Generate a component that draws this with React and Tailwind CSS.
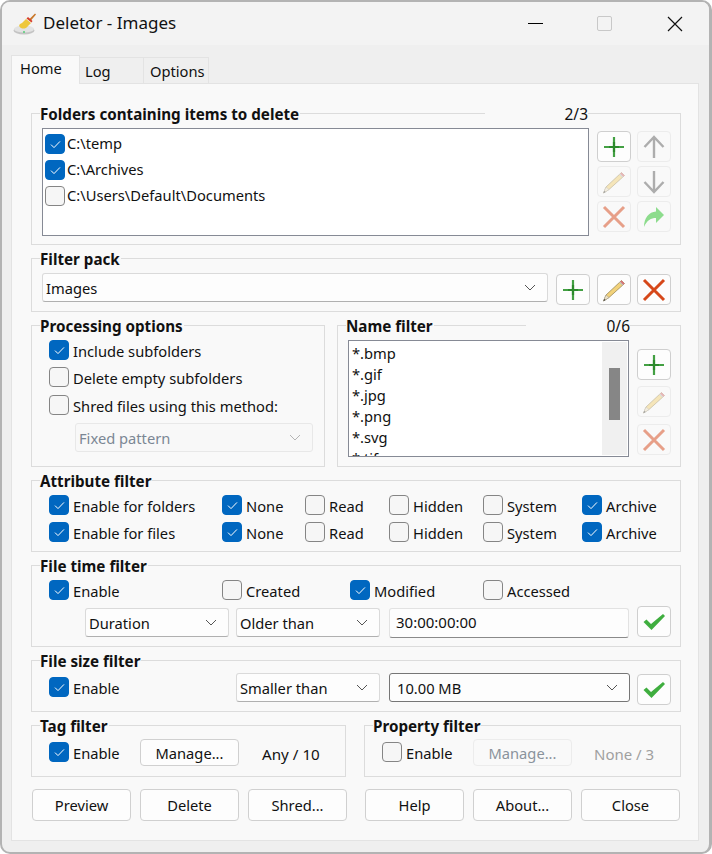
import React from "react";

const F = "[font-family:'Noto_Sans',sans-serif]";

function Check({ on, label, w }) {
  return (
    <div className="flex items-start shrink-0 h-[20px]" style={w ? { width: w } : undefined}>
      <span className={"w-[20px] h-[20px] rounded-[4px] shrink-0 flex items-center justify-center border " + (on ? "bg-[#0067c0] border-[#0067c0]" : "bg-[#f6f6f6] border-[#858585]")}>
        {on && (
          <svg width="11" height="9" viewBox="0 0 11 9" fill="none"><path d="M1 4.6 L4 7.6 L10 1.4" stroke="#fff" strokeWidth="1" /></svg>
        )}
      </span>
      <span className="ml-[4px] text-[14.7px] leading-[23px] whitespace-nowrap text-[#111]">{label}</span>
    </div>
  );
}

const Plus = () => (
  <svg width="20" height="20" viewBox="0 0 20 20"><path d="M0 10H20M10 0V20" stroke="#43a043" strokeWidth="2.2" /><path d="M5 10H15M10 5V15" stroke="#2c8a2c" strokeWidth="2.2" /></svg>
);
const Cross = ({ dim }) => (
  <svg width="24" height="24" viewBox="0 0 24 24" className={dim ? "opacity-50" : ""}><path d="M2 2L22 22M22 2L2 22" stroke="#d6481a" strokeWidth="3" /></svg>
);
const Pencil = ({ dim }) => (
  <svg width="24" height="24" viewBox="0 0 24 24" className={dim ? "opacity-50" : ""}>
    <path d="M19.5 2.5 L22.5 5.5 L7 19.5 L1.5 23 L4 17 Z" fill="#f2d27a" stroke="#8f7d4a" strokeWidth="0.7" />
    <path d="M4 17 L7 19.5 L1.5 23 Z" fill="#efe3c6" stroke="#8a8a8a" strokeWidth="0.4" />
    <path d="M1.5 23 L2.3 21 L3.6 22 Z" fill="#333" />
    <path d="M19.5 2.5 L22.5 5.5 L21.2 6.7 L18.2 3.7 Z" fill="#d9707a" />
    <path d="M18.2 3.7 L21.2 6.7 L20.2 7.6 L17.2 4.6 Z" fill="#bdbdbd" />
  </svg>
);
const Arrow = ({ down }) => (
  <svg width="22" height="24" viewBox="0 0 22 24" className={down ? "rotate-180" : ""}><path d="M11 23V2M1.5 12L11 2L20.5 12" fill="none" stroke="#adadad" strokeWidth="2.4" /></svg>
);
const Share = () => (
  <svg width="22" height="22" viewBox="0 0 22 22"><path d="M13 1 L21 9 L13 17 L13 12 C8 12 4 14 1 21 C1 12 6 6 13 5.5 Z" fill="#8ddc8d" /></svg>
);
const Tick = () => (
  <svg width="24" height="20" viewBox="0 0 24 20"><path d="M1.5 10 L4.5 7.5 L9 12 L21 2 L23 4 L9.5 18 Z" fill="#3fae3f" /></svg>
);
const Chevron = ({ c = "#555" }) => (
  <svg width="12" height="7" viewBox="0 0 12 7"><path d="M1 1L6 6L11 1" fill="none" stroke={c} strokeWidth="1" /></svg>
);

function Btn({ off, children, className = "" }) {
  return (
    <div className={"w-[34px] h-[31px] rounded-[4px] border flex items-center justify-center shrink-0 " + (off ? "border-[#ececec] bg-[#f9f9f9] " : "border-[#cfcfcf] bg-[#fdfdfd] ") + className}>
      {children}
    </div>
  );
}

function Select({ text, w, off, dark, className = "" }) {
  return (
    <div style={{ width: w }} className={"h-[29px] shrink-0 rounded-[3px] border flex items-center justify-between pr-[11px] " + (dark ? "pl-[7px] " : "pl-[3px] ") + (off ? "border-[#e8e8e8] bg-[#f8f8f8] text-[#7b8794] " : dark ? "border-[#767676] bg-[#fdfdfd] " : "border-[#dadada] border-b-[#b0b0b0] bg-[#fdfdfd] ") + className}>
      <span className="text-[14.7px] leading-[29px] pt-[1px] whitespace-nowrap">{text}</span>
      <Chevron c={off ? "#b5b5b5" : "#555"} />
    </div>
  );
}

function Group({ title, h, w, counter, counterStart, className = "", children }) {
  return (
    <div style={{ height: h, width: w }} className={"relative border border-[#dcdcdc] shrink-0 " + className}>
      <span className="absolute left-[8px] top-[-10px] h-[20px] leading-[20px] bg-[#f9f9f9] pr-[1px] text-[15.2px] font-bold whitespace-nowrap">{title}</span>
      {counter && (
        <span style={{ left: counterStart[0], width: counterStart[1] }} className="absolute top-[-11px] h-[20px] leading-[22px] bg-[#f9f9f9] text-right text-[15.5px]">{counter}</span>
      )}
      {children}
    </div>
  );
}

function Push({ text, off, w = 99, h = 32 }) {
  return (
    <div style={{ width: w, height: h }} className={"rounded-[4px] border flex items-center justify-center text-[14.7px] shrink-0 pt-[1px] " + (off ? "border-[#ececec] bg-[#f9f9f9] text-[#8a939c]" : "border-[#d0d0d0] bg-[#fdfdfd]")}>{text}</div>
  );
}

function Broom() {
  return (
    <svg width="24" height="24" viewBox="0 0 24 24" className="shrink-0">
      <ellipse cx="11" cy="18.5" rx="10.5" ry="4" fill="#c4c4c4" />
      <ellipse cx="11" cy="17" rx="10" ry="3.6" fill="#e2e2e2" />
      <circle cx="11" cy="20" r="1" fill="#55cc77" />
      <path d="M8 16 C5 14 6 12 9 11 L13 7 L18 11 L15 14 C13 17 10 17 8 16 Z" fill="#eec73a" />
      <path d="M16 7.5 L22 1.5 L23 2.5 L17.5 9 Z" fill="#c9772a" />
      <path d="M13.5 6.5 L18.5 10.5 L19.5 9 L15 5 Z" fill="#d6402a" />
    </svg>
  );
}

export default function App() {
  const folders = [["C:\\temp", true], ["C:\\Archives", true], ["C:\\Users\\Default\\Documents", false]];
  const attrs = [["None", true, 83], ["Read", false, 84], ["Hidden", false, 94], ["System", false, 99], ["Archive", true, 90]];
  return (
    <div className={F + " w-[712px] h-[854px] bg-white text-[#111] overflow-hidden"}>
      <div className="w-[712px] h-[854px] border-[2px] border-r-[3px] border-[#b3b3b3] rounded-[10px] bg-[#efefef] overflow-hidden flex flex-col">
        <div className="h-[43px] bg-[#f3f3f3] flex items-center shrink-0 pl-[11px]">
          <Broom />
          <span className="ml-[6px] text-[17px] leading-[23px] mb-[2px]">Deletor - Images</span>
          <div className="ml-auto flex items-center">
            <div className="w-[15px] h-[1px] bg-black" />
            <div className="ml-[54px] w-[15px] h-[15px] border border-[#c8c8c8] rounded-[2px]" />
            <svg width="16" height="16" viewBox="0 0 16 16" className="ml-[55px] mr-[26px]"><path d="M1 1L15 15M15 1L1 15" stroke="#111" strokeWidth="1.2" /></svg>
          </div>
        </div>
        <div className="h-[38px] flex items-end pl-[9px] shrink-0 relative z-10">
          <div className="w-[69px] h-[29px] -mb-px bg-[#f9f9f9] border border-b-0 border-[#e3e3e3] pl-[8px] text-[14.7px] leading-[24px]">Home</div>
          <div className="w-[64px] h-[26px] border-r border-t border-[#e3e3e3] pl-[5px] text-[14.7px] leading-[27px]">Log</div>
          <div className="w-[65px] h-[26px] border-r border-t border-[#e3e3e3] pl-[6px] text-[14.7px] leading-[27px]">Options</div>
        </div>
        <div className="ml-[9px] w-[688px] h-[758px] bg-[#f9f9f9] border border-[#e3e3e3] pt-[29px] pl-[19px] shrink-0">
          <Group title="Folders containing items to delete" h={132} w={650} counter="2/3" counterStart={[453, 103]} className="flex pl-[10px] pt-[14px]">
            <div className="w-[547px] h-[108px] bg-white border border-[#868a95] pl-[2px] pt-[5px] shrink-0">
              {folders.map(([t, on]) => (
                <div key={t} className="flex items-start h-[26px]">
                  <span className={"w-[20px] h-[20px] rounded-[4px] shrink-0 flex items-center justify-center border " + (on ? "bg-[#0067c0] border-[#0067c0]" : "bg-[#f6f6f6] border-[#858585]")}>
                    {on && <svg width="11" height="9" viewBox="0 0 11 9" fill="none"><path d="M1 4.6 L4 7.6 L10 1.4" stroke="#fff" strokeWidth="1" /></svg>}
                  </span>
                  <span className="ml-[2px] text-[14.7px] leading-[19px] whitespace-nowrap">{t}</span>
                </div>
              ))}
            </div>
            <div className="ml-[8px] mt-[3px] grid grid-cols-[34px_34px] gap-x-[6px] gap-y-[4px] h-fit">
              <Btn><Plus /></Btn>
              <Btn off><Arrow /></Btn>
              <Btn off><Pencil dim /></Btn>
              <Btn off><Arrow down /></Btn>
              <Btn off><Cross dim /></Btn>
              <Btn off><Share /></Btn>
            </div>
          </Group>

          <Group title="Filter pack" h={54} w={650} className="mt-[13px] flex pl-[10px] pt-[14px]">
            <Select text="Images" w={506} />
            <div className="flex gap-x-[6px] ml-[8px] mt-[1px]">
              <Btn><Plus /></Btn>
              <Btn className="ml-[1px]"><Pencil /></Btn>
              <Btn><Cross /></Btn>
            </div>
          </Group>

          <div className="flex mt-[13px]">
            <Group title="Processing options" h={142} w={294} className="pl-[17px] pt-[14px]">
              <Check on label="Include subfolders" />
              <div className="mt-[7px]"><Check label="Delete empty subfolders" /></div>
              <div className="mt-[8px]"><Check label="Shred files using this method:" /></div>
              <Select text="Fixed pattern" w={238} off className="mt-[8px] ml-[26px] h-[28px]" />
            </Group>
            <Group title="Name filter" h={142} w={344} counter="0/6" counterStart={[188, 104]} className="ml-[12px] flex pl-[10px] pt-[14px]">
              <div className="w-[281px] h-[117px] bg-white border border-[#868a95] shrink-0 flex overflow-hidden">
                <div className="flex-1 pl-[3px] pt-[2px] text-[14.7px] leading-[21px]">
                  {["*.bmp", "*.gif", "*.jpg", "*.png", "*.svg", "*.tif"].map((t) => <div key={t}>{t}</div>)}
                </div>
                <div className="w-[25px] my-[1px] mr-px bg-[#f0f0f0] pt-[26px] pl-[7px]">
                  <div className="w-[11px] h-[52px] bg-[#868686]" />
                </div>
              </div>
              <div className="ml-[8px] mt-[9px] flex flex-col gap-y-[6px]">
                <Btn><Plus /></Btn>
                <Btn off><Pencil dim /></Btn>
                <Btn off className="mt-[1px]"><Cross dim /></Btn>
              </div>
            </Group>
          </div>

          <Group title="Attribute filter" h={72} w={650} className="mt-[13px] pl-[17px] pt-[14px]">
            {["Enable for folders", "Enable for files"].map((l, i) => (
              <div key={l} className={"flex " + (i ? "mt-[7px]" : "")}>
                <Check on label={l} w={173} />
                {attrs.map(([t, on, w]) => <Check key={t} on={on} label={t} w={w} />)}
              </div>
            ))}
          </Group>

          <Group title="File time filter" h={82} w={650} className="mt-[13px] pt-[14px]">
            <div className="flex pl-[17px]">
              <Check on label="Enable" w={173} />
              <Check label="Created" w={128} />
              <Check on label="Modified" w={133} />
              <Check label="Accessed" />
            </div>
            <div className="flex items-start mt-[6px] pl-[53px]">
              <Select text="Duration" w={144} className="mt-[2px]" />
              <Select text="Older than" w={144} className="ml-[7px] mt-[2px]" />
              <div className="ml-[9px] mt-[2px] w-[240px] h-[30px] bg-[#fdfdfd] border border-[#e2e2e2] border-b-[#8a8a8a] rounded-[3px] pl-[6px] text-[15px] leading-[27px] shrink-0">30:00:00:00</div>
              <Btn className="ml-[8px]"><Tick /></Btn>
            </div>
          </Group>

          <Group title="File size filter" h={52} w={650} className="mt-[13px] flex items-start pl-[17px] pt-[12px]">
            <div className="w-[187px] mt-[4px] shrink-0"><Check on label="Enable" /></div>
            <Select text="Smaller than" w={144} />
            <Select text="10.00 MB" w={241} dark className="ml-[9px]" />
            <Btn className="ml-[7px] mt-[1px]"><Tick /></Btn>
          </Group>

          <div className="flex mt-[13px]">
            <Group title="Tag filter" h={52} w={315} className="flex items-start pl-[17px] pt-[13px]">
              <div className="w-[91px] mt-[3px] shrink-0"><Check on label="Enable" /></div>
              <Push text="Manage..." h={27} />
              <span className="ml-[23px] text-[15.2px] leading-[30px] whitespace-nowrap">Any / 10</span>
            </Group>
            <Group title="Property filter" h={52} w={317} className="ml-[18px] flex items-start pl-[17px] pt-[13px]">
              <div className="w-[91px] mt-[3px] shrink-0"><Check label="Enable" /></div>
              <Push text="Manage..." h={27} off />
              <span className="ml-[22px] text-[15px] leading-[30px] whitespace-nowrap text-[#a0a0a0]">None / 3</span>
            </Group>
          </div>

          <div className="flex mt-[12px] pl-[1px]">
            <div className="flex gap-x-[9px]">
              <Push text="Preview" />
              <Push text="Delete" />
              <Push text="Shred..." />
            </div>
            <div className="flex gap-x-[9px] ml-[18px]">
              <Push text="Help" />
              <Push text="About..." />
              <Push text="Close" />
            </div>
          </div>
        </div>
      </div>
    </div>
  );
}
